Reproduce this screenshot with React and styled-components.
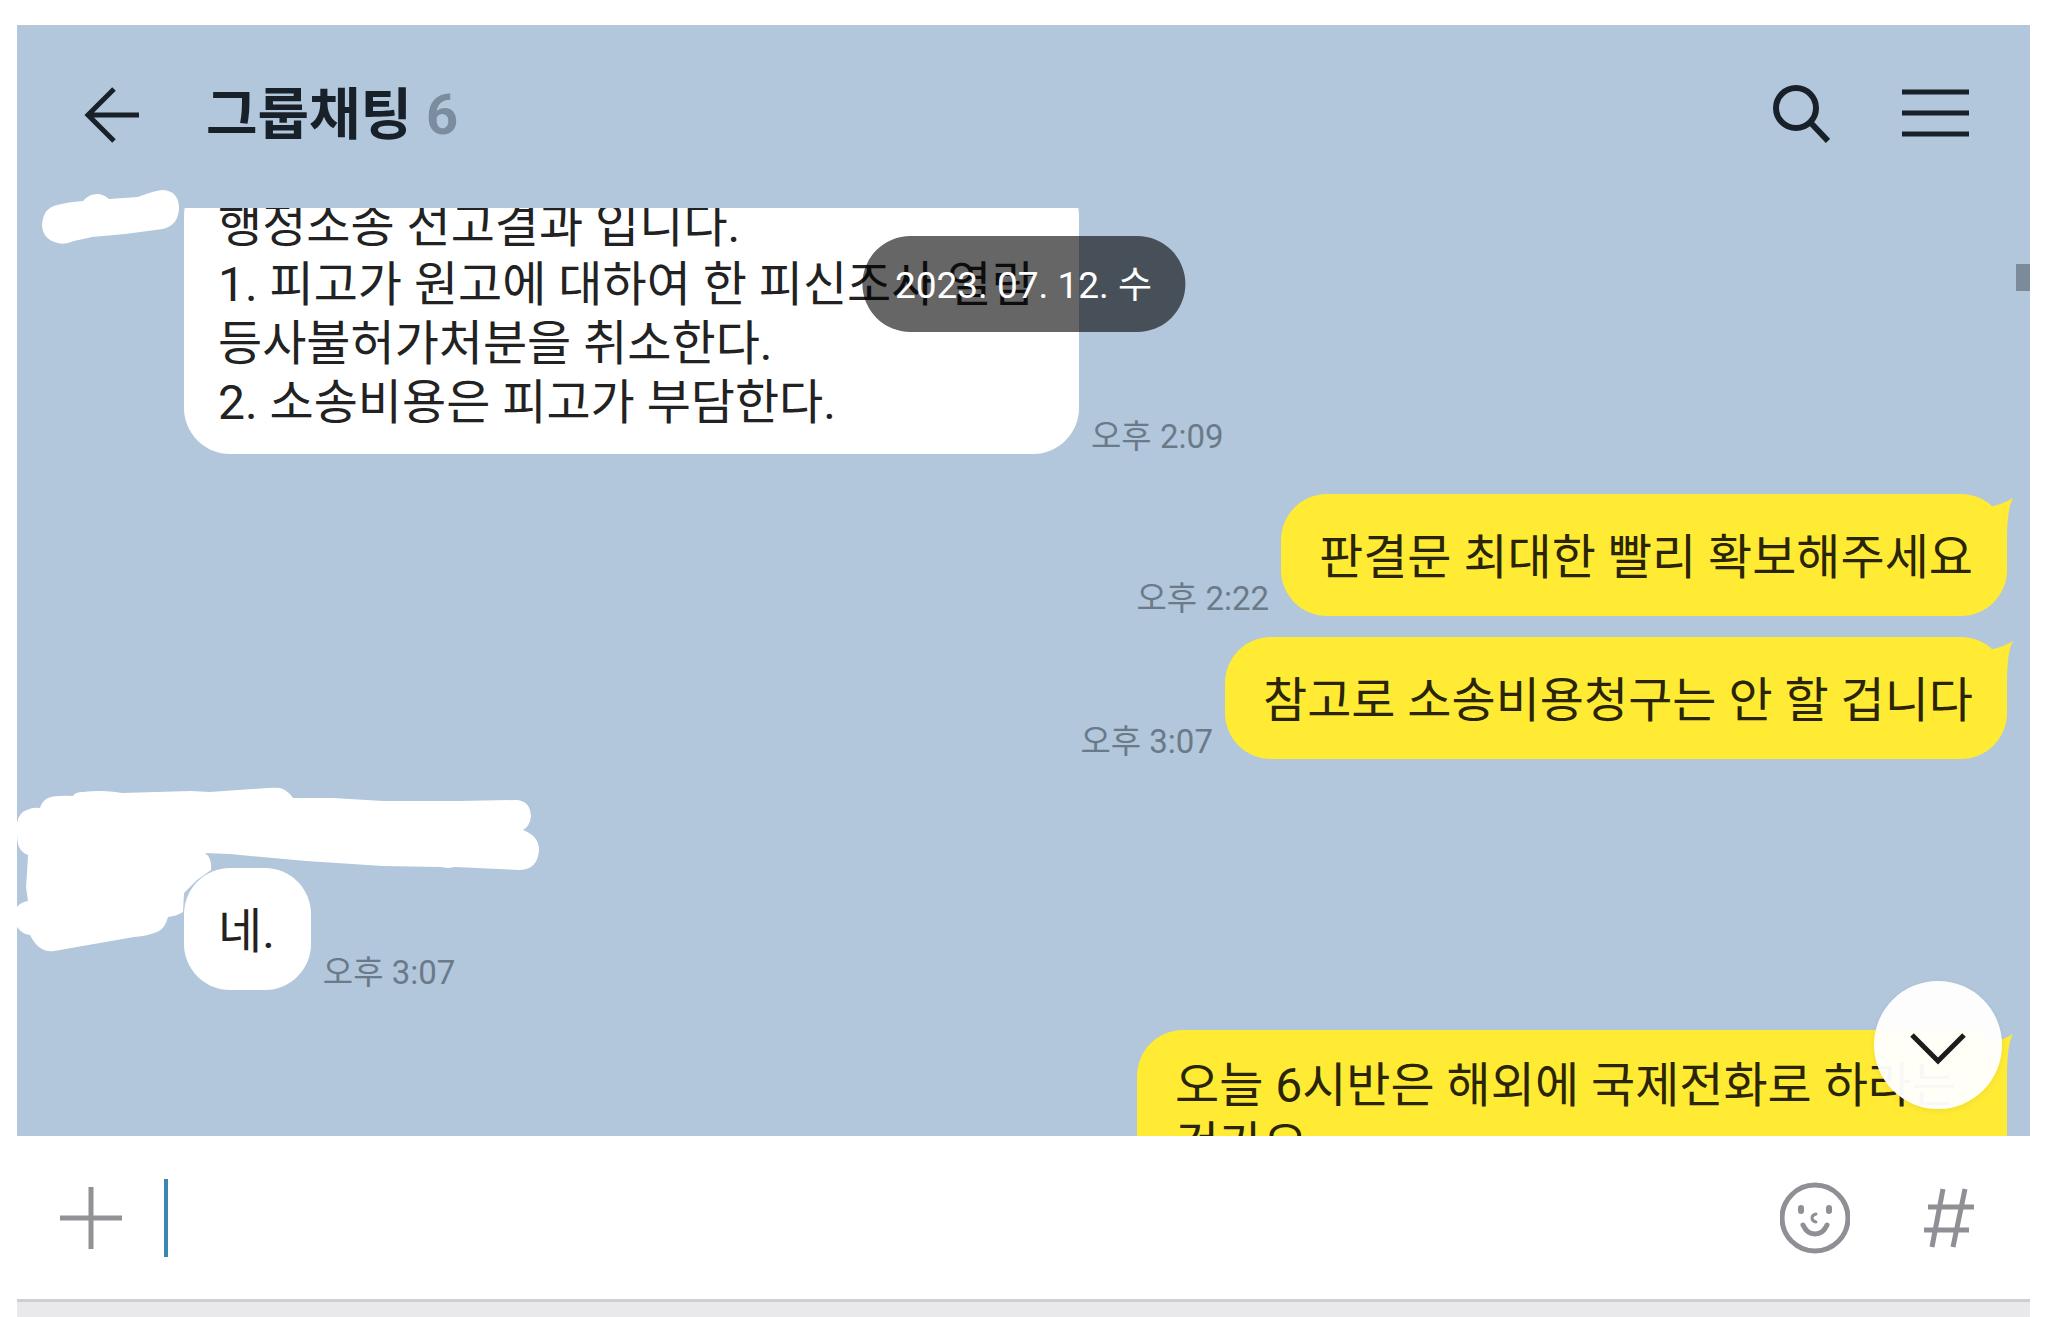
// src/App.jsx
import React, { useState } from 'react';
import styled, { createGlobalStyle } from 'styled-components';

const room = {
  title: '그룹채팅',
  members: 6,
  date: '2023. 07. 12. 수',
};

const groups = [
  {
    id: 1,
    messages: [
      {
        id: 11,
        time: '오후 2:09',
        text:
          '행정소송 선고결과 입니다.\n1. 피고가 원고에 대하여 한 피신조사 열람등사불허가처분을 취소한다.\n2. 소송비용은 피고가 부담한다.',
      },
    ],
  },
  {
    id: 2,
    mine: true,
    messages: [
      { id: 21, time: '오후 2:22', text: '판결문 최대한 빨리 확보해주세요' },
      { id: 22, time: '오후 3:07', text: '참고로 소송비용청구는 안 할 겁니다' },
    ],
  },
  {
    id: 3,
    hiddenName: true,
    messages: [{ id: 31, time: '오후 3:07', text: '네.' }],
  },
  {
    id: 4,
    mine: true,
    messages: [{ id: 41, text: '오늘 6시반은 해외에 국제전화로 하라는 건가요' }],
  },
];

const BackIcon = () => (
  <svg width="56" height="56" viewBox="0 0 56 56" fill="none" stroke="#18212a" strokeWidth="5">
    <path d="M55 28H4M30 2L4 28l26 26" />
  </svg>
);

const SearchIcon = () => (
  <svg width="60" height="60" viewBox="0 0 60 60" fill="none" stroke="#18212a" strokeWidth="6">
    <circle cx="26" cy="23" r="20" />
    <path d="M40 37l18 19" />
  </svg>
);

const MenuIcon = () => (
  <svg width="68" height="60" viewBox="0 0 68 60" fill="none" stroke="#18212a" strokeWidth="5">
    <path d="M1 7h67M1 28h67M1 49h67" />
  </svg>
);

const PlusIcon = () => (
  <svg width="62" height="62" viewBox="0 0 62 62" fill="none" stroke="#919196" strokeWidth="5">
    <path d="M31 0v62M0 31h62" />
  </svg>
);

const SmileIcon = () => (
  <svg
    width="70"
    height="72"
    viewBox="0 0 70 72"
    fill="none"
    stroke="#8f9096"
    strokeWidth="5"
    strokeLinecap="round"
  >
    <circle cx="35" cy="36" r="33" />
    <path d="M21 26v3M49 26v3" strokeWidth="6" />
    <path d="M36 32q-4 1-4 4t4 4" strokeWidth="3" />
    <path d="M23 43q4 9 12 9t12-9" />
  </svg>
);

const HashIcon = () => (
  <svg width="50" height="60" viewBox="0 0 50 60" fill="none" stroke="#8f9096" strokeWidth="5">
    <path d="M19 1L8 59M41 1L29 59M4 19h46M0 42h45" />
  </svg>
);

const ChevronIcon = () => (
  <svg width="56" height="34" viewBox="0 0 56 34" fill="none" stroke="#1c1c1c" strokeWidth="5">
    <path d="M2 3l26 26L54 3" />
  </svg>
);

const BubbleTail = () => (
  <Tail width="30" height="50" viewBox="0 0 30 50" aria-hidden="true">
    <path d="M0 18L10 12Q20 10 30 4Q24 14 24 46L0 46Z" fill="#ffeb33" />
  </Tail>
);

const App = () => {
  const [draft, setDraft] = useState('');

  return (
    <>
      <GlobalStyle />
      <Page>
        <Header>
          <IconButton aria-label="뒤로">
            <BackIcon />
          </IconButton>
          <Title>
            {room.title} <Count>{room.members}</Count>
          </Title>
          <HeaderActions>
            <IconButton aria-label="검색">
              <SearchIcon />
            </IconButton>
            <IconButton aria-label="메뉴">
              <MenuIcon />
            </IconButton>
          </HeaderActions>
        </Header>

        <Room>
          <Messages>
            <MessageList>
              {groups.map((group) => (
                <Group key={group.id}>
                  {group.hiddenName && (
                    <NameSlot>
                      <NameCover width="524" height="174" viewBox="0 0 524 174" aria-hidden="true">
                        <path
                          fill="#fff"
                          d="M0 43Q2 32 10 30Q16 27 23 28Q25 21 31 18Q38 15 56 16Q58 12 66 12Q82 10 98 12L105 13L174 11L193 12L251 8Q262 7 266 9Q273 13 276 18L316 18L366 21L442 21L500 20Q513 21 514 36Q513 46 506 50Q522 56 522 70Q521 89 503 90L438 87L431 88L423 87L366 86L289 81L213 74L188 73Q195 78 194 90L180 100L167 113L166 132Q160 136 151 137Q148 148 142 151Q132 156 117 157L37 171Q30 172 25 169Q18 165 13 155Q5 154 0 147L0 127Q4 122 11 121L9 107L10 93L11 75Q5 73 2 67Q0 62 0 53Z"
                        />
                      </NameCover>
                    </NameSlot>
                  )}
                  {group.messages.map((message) => (
                    <Row key={message.id} $mine={group.mine}>
                      <Bubble $mine={group.mine}>
                        <BubbleText>{message.text}</BubbleText>
                        {group.mine && <BubbleTail />}
                      </Bubble>
                      {message.time && <Time>{message.time}</Time>}
                    </Row>
                  ))}
                </Group>
              ))}
            </MessageList>
          </Messages>
          <AvatarCover width="142" height="58" viewBox="0 0 142 58" aria-hidden="true">
            <path
              fill="#fff"
              d="M2 37Q3 20 17 17Q28 14 43 13Q49 6 57 6Q63 6 69 11L98 9Q116 2 123 2Q138 3 139 19Q139 37 123 41L85 46L52 49L34 53Q24 57 18 55Q3 52 2 37Z"
            />
          </AvatarCover>
          <DatePill>{room.date}</DatePill>
          <ScrollThumb />
          <ScrollDown aria-label="맨 아래로">
            <ChevronIcon />
          </ScrollDown>
        </Room>

        <Composer>
          <IconButton aria-label="추가">
            <PlusIcon />
          </IconButton>
          <Field>
            <Caret />
            <Input
              aria-label="메시지 입력"
              value={draft}
              onChange={(e) => setDraft(e.target.value)}
            />
          </Field>
          <ComposerActions>
            <IconButton aria-label="이모티콘">
              <SmileIcon />
            </IconButton>
            <IconButton aria-label="샵검색">
              <HashIcon />
            </IconButton>
          </ComposerActions>
        </Composer>
        <Keyboard />
      </Page>
    </>
  );
};

const GlobalStyle = createGlobalStyle`
  * {
    box-sizing: border-box;
  }

  body {
    margin: 0;
    background: #fff;
    font-family: Roboto, 'Noto Sans CJK KR', sans-serif;
  }
`;

const Page = styled.main`
  display: flex;
  flex-direction: column;
  height: 100vh;
  padding: 25px 18px 0 17px;
`;

const IconButton = styled.button`
  display: flex;
  flex: none;
  padding: 0;
  border: none;
  background: none;
  cursor: pointer;
`;

const Header = styled.header`
  display: flex;
  flex: none;
  align-items: center;
  height: 183px;
  padding: 0 61px 4px 67px;
  background: #b2c7db;
`;

const Title = styled.h1`
  margin: 0 0 0 66px;
  color: #18212a;
  font-size: 56px;
  font-weight: 700;
  line-height: 64px;
`;

const Count = styled.span`
  color: #7a8c9d;
`;

const HeaderActions = styled.div`
  display: flex;
  align-items: center;
  gap: 71px;
  margin-left: auto;
`;

const Room = styled.section`
  position: relative;
  display: flex;
  flex: 1;
  flex-direction: column;
  min-height: 0;
  background: #b2c7db;
`;

const Messages = styled.div`
  flex: 1;
  min-height: 0;
  overflow: hidden;
`;

/* list is scrolled a little past the first message */
const MessageList = styled.div`
  display: flex;
  flex-direction: column;
  gap: 40px;
  margin-top: -38px;
`;

const Group = styled.div`
  display: flex;
  flex-direction: column;
  gap: 21px;
`;

const NameSlot = styled.div`
  position: relative;
  height: 48px;
`;

const NameCover = styled.svg`
  position: absolute;
  top: -19px;
  left: 0;
  z-index: 1;
`;

const AvatarCover = styled.svg`
  position: absolute;
  top: -20px;
  left: 23px;
`;

const Row = styled.div`
  display: flex;
  flex-direction: ${({ $mine }) => ($mine ? 'row-reverse' : 'row')};
  align-items: flex-end;
  gap: 12px;
  padding: 0 23px 0 167px;
`;

const Bubble = styled.div`
  position: relative;
  display: flex;
  align-items: center;
  min-height: 122px;
  max-width: ${({ $mine }) => ($mine ? '870px' : '895px')};
  padding: ${({ $mine }) => ($mine ? '26px 34px 22px 38px' : '26px 36px 22px 34px')};
  border-radius: 46px;
  background: ${({ $mine }) => ($mine ? '#ffeb33' : '#fff')};
  color: ${({ $mine }) => ($mine ? '#2a2508' : '#222')};
`;

const BubbleText = styled.p`
  margin: 0;
  font-size: 48px;
  line-height: 59px;
  white-space: pre-line;
`;

const Tail = styled.svg`
  position: absolute;
  top: 0;
  right: -6px;
`;

const Time = styled.time`
  color: #6b7a88;
  font-size: 33px;
  line-height: 34px;
`;

const DatePill = styled.div`
  position: absolute;
  top: 28px;
  left: 50%;
  padding: 4px 33px 0;
  border-radius: 48px;
  background: rgba(0, 0, 0, 0.6);
  color: #fff;
  font-size: 37px;
  line-height: 92px;
  white-space: nowrap;
  transform: translateX(-50%);
`;

const ScrollThumb = styled.div`
  position: absolute;
  top: 56px;
  right: 0;
  width: 14px;
  height: 27px;
  background: #7c8b99;
`;

const ScrollDown = styled.button`
  position: absolute;
  right: 28px;
  bottom: 27px;
  display: flex;
  align-items: center;
  justify-content: center;
  width: 128px;
  height: 128px;
  padding: 8px 0 0;
  border: none;
  border-radius: 50%;
  background: rgba(255, 255, 255, 0.97);
  box-shadow: 0 2px 6px rgba(0, 0, 0, 0.06);
  cursor: pointer;
`;

const Composer = styled.div`
  display: flex;
  flex: none;
  align-items: center;
  height: 163px;
  padding: 0 56px 0 43px;
  background: #fff;
`;

const Field = styled.div`
  display: flex;
  flex: 1;
  align-items: center;
  margin: 0 42px;
`;

const Caret = styled.span`
  width: 4px;
  height: 78px;
  background: #3c86b4;
`;

const Input = styled.input`
  flex: 1;
  height: 78px;
  padding: 0;
  border: none;
  outline: none;
  background: none;
  color: #222;
  font-family: inherit;
  font-size: 48px;
`;

const ComposerActions = styled.div`
  display: flex;
  align-items: center;
  gap: 74px;
`;

const Keyboard = styled.div`
  flex: none;
  height: 18px;
  border-top: 3px solid #cfcfd1;
  background: #e9e9eb;
`;

export default App;
